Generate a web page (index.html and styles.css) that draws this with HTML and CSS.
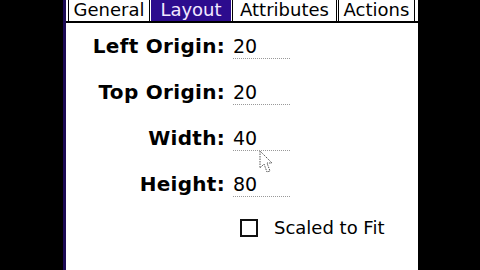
FILE: index.html
```html
<!DOCTYPE html>
<html lang="en">
<head>
    <meta charset="UTF-8">
    <title>Layout</title>
    <link rel="stylesheet" href="styles.css">
</head>
<body>
    <div class="screen">
        <div class="tabs">
            <div class="tab" style="width: 82px">General</div>
            <div class="tab active" style="width: 80px">Layout</div>
            <div class="tab" style="width: 105px">Attributes</div>
            <div class="tab" style="width: 77px">Actions</div>
        </div>

        <div class="form">
            <div class="label">Left Origin:</div>
            <div class="field">20</div>
            <div class="label">Top Origin:</div>
            <div class="field">20</div>
            <div class="label">Width:</div>
            <div class="field">40</div>
            <div class="label">Height:</div>
            <div class="field">80</div>
        </div>

        <div class="check-row">
            <span class="checkbox"></span>
            <span class="check-label">Scaled to Fit</span>
        </div>

        <svg class="cursor" width="14" height="26" viewBox="0 0 14 26">
            <path d="M1 1 L1 18 L5 14 L8 22 L11 21 L8 13 L13 13 Z" fill="none" stroke="#555" stroke-width="1" stroke-dasharray="1.5 1"/>
        </svg>
    </div>
</body>
</html>
```

FILE: styles.css
```css
body {
    margin: 0;
    background-color: #000;
    font-family: "DejaVu Sans", sans-serif;
    height: 270px;
    overflow: hidden;
}
.screen {
    position: relative;
    margin-left: 66px;
    width: 352px;
    height: 270px;
    background-color: #fff;
    box-shadow: -3px 0 0 #1c0b55;
}
.tabs {
    display: flex;
    height: 21px;
    border-bottom: 2px solid #000;
    padding-left: 2px;
    gap: 1px;
}
.tab {
    box-sizing: border-box;
    border: 1px solid #000;
    border-top: none;
    border-bottom: none;
    font-size: 18px;
    line-height: 20px;
    text-align: center;
    color: #000;
}
.tab.active {
    background-color: #2c0c8e;
    color: #f2e8ff;
    border-color: #2c0c8e;
}
.form {
    display: grid;
    grid-template-columns: 159px 60px;
    column-gap: 8px;
    row-gap: 21px;
    padding-top: 11px;
}
.label {
    font-weight: bold;
    font-size: 20px;
    letter-spacing: 0.3px;
    line-height: 24px;
    text-align: right;
}
.field {
    font-size: 19px;
    line-height: 24px;
    border-bottom: 1px dotted #999;
    width: 57px;
}
.check-row {
    display: flex;
    align-items: center;
    margin-top: 20px;
    padding-left: 174px;
}
.checkbox {
    width: 14px;
    height: 14px;
    border: 2px solid #111;
}
.check-label {
    margin-left: 16px;
    font-size: 18px;
}
.cursor {
    position: absolute;
    left: 193px;
    top: 150px;
}
```
